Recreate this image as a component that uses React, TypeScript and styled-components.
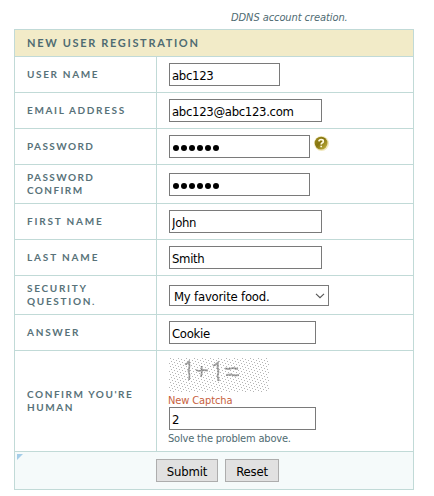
import React from 'react';
import styled, { createGlobalStyle } from 'styled-components';

const GlobalStyle = createGlobalStyle`
  *, *::before, *::after { box-sizing: border-box; }
  html, body { margin: 0; background: #fff; overflow: hidden; }
  body { font-family: "DejaVu Sans Condensed", "DejaVu Sans", sans-serif; }
`;

const line = '#c1dad7';
const ink = '#4f6b72';
const formFont = '"DejaVu Sans Condensed", "Noto Sans", "DejaVu Sans", sans-serif';

const Page = styled.main`
  width: 434px;
  height: 496px;
  padding: 10px 20px 0 14px;
  background: #fff;
`;

const Caption = styled.p`
  height: 19px;
  margin: 0;
  padding-left: 217px;
  font: italic 11px/15px "DejaVu Sans Condensed", "DejaVu Sans", sans-serif;
  letter-spacing: -0.08px;
  color: ${ink};
  white-space: nowrap;
`;

const Form = styled.form`
  width: 400px;
  border: 1px solid ${line};
  border-bottom: 0;
`;

const Title = styled.h1`
  height: 27px;
  margin: 0;
  padding-left: 12px;
  border-bottom: 1px solid ${line};
  background: #f2ebc8;
  color: ${ink};
  font: bold 11px/26px Lato, sans-serif;
  letter-spacing: 1.67px;
`;

const Row = styled.div<{ $height: number }>`
  display: grid;
  grid-template-columns: 142px 1fr;
  height: ${p => p.$height}px;
  border-bottom: 1px solid ${line};
`;

const Label = styled.label<{ $track?: number }>`
  display: flex;
  align-items: center;
  padding-left: 12px;
  border-right: 1px solid ${line};
  color: #587279;
  font: bold 10px/13px Lato, sans-serif;
  letter-spacing: ${p => p.$track ?? 1.65}px;
  white-space: pre;
`;

const Cell = styled.div`
  display: flex;
  align-items: center;
  padding-left: 12px;
`;

const Input = styled.input<{ $width: number }>`
  width: ${p => p.$width}px;
  height: 23px;
  margin: 0;
  padding: 3px 2px 1px;
  border: 1px solid #7a7a7a;
  border-radius: 0;
  outline: 0;
  background: #fff;
  color: #000;
  font: 13px/17px ${formFont};
  letter-spacing: -0.32px;
`;

const Secret = styled.div`
  display: flex;
  align-items: center;
  gap: 2px;
  width: 141px;
  height: 23px;
  padding: 3px 0 0 3px;
  border: 1px solid #7a7a7a;
`;

const Dot = styled.span`
  width: 6px;
  height: 6px;
  border-radius: 50%;
  background: #000;
`;

const HelpIcon = styled.svg`
  margin: -5px 0 0 4px;
`;

const SelectBox = styled.div`
  display: flex;
  align-items: center;
  justify-content: space-between;
  width: 160px;
  height: 21px;
  padding: 2px 3px 0 4px;
  border: 1px solid #7a7a7a;
  color: #000;
  font: 13px/17px ${formFont};
  letter-spacing: -0.22px;
`;

const CaptchaCell = styled.div`
  display: flex;
  flex-direction: column;
  padding: 7px 0 0 12px;
`;

const CaptchaLink = styled.a`
  height: 15px;
  margin-left: -1px;
  color: #c75f3e;
  font: 11px/17px "DejaVu Sans Condensed", "DejaVu Sans", sans-serif;
  letter-spacing: -0.12px;
`;

const Hint = styled.span`
  margin-left: -1px;
  color: ${ink};
  font: 11px/17px "DejaVu Sans Condensed", "DejaVu Sans", sans-serif;
  letter-spacing: -0.18px;
`;

const Footer = styled.div`
  display: flex;
  height: 38px;
  border-bottom: 1px solid ${line};
  background: #f5fafa;
`;

const Corner = styled.svg`
  margin: 2px 0 0 2px;
`;

const Buttons = styled.div`
  display: flex;
  gap: 7px;
  margin: 7px 0 0 133px;
`;

const Button = styled.button<{ $width: number }>`
  width: ${p => p.$width}px;
  height: 23px;
  padding: 2px 0 0;
  border: 1px solid #adadad;
  border-radius: 0;
  background: #e1e1e1;
  color: #000;
  font: 13px/17px ${formFont};
  letter-spacing: -0.2px;
`;

function Password() {
  return (
    <Secret>
      {Array.from({ length: 6 }, (_, i) => <Dot key={i} />)}
    </Secret>
  );
}

function Help() {
  return (
    <HelpIcon width="16" height="16" viewBox="0 0 16 16">
      <defs>
        <linearGradient id="gold" x1="0" y1="0" x2="1" y2="1">
          <stop offset="0" stopColor="#a08f24" />
          <stop offset="0.45" stopColor="#85740f" />
          <stop offset="1" stopColor="#cdbd48" />
        </linearGradient>
      </defs>
      <circle cx="7.5" cy="7.5" r="7.5" fill="#f1e8bd" />
      <circle cx="7.1" cy="7.1" r="6.4" fill="url(#gold)" />
      <path d="M4.9 5.3Q5.1 3.5 7.2 3.5Q9.4 3.6 9.3 5.3Q9.2 6.4 8 7Q7.2 7.4 7.2 8.5M7.2 9.7V11.3" fill="none" stroke="#fffbe0" strokeWidth="1.7" />
    </HelpIcon>
  );
}

function Captcha() {
  return (
    <svg width="100" height="34">
      <defs>
        <pattern id="grain" width="8" height="8" patternUnits="userSpaceOnUse">
          <path
            d="M1 0h1v1h-1zM4 1h1v1h-1zM7 2h1v1h-1zM2 3h1v1h-1zM5 4h1v1h-1zM0 5h1v1h-1zM3 6h1v1h-1zM6 7h1v1h-1z"
            fill="#b4b4b4"
            shapeRendering="crispEdges"
          />
        </pattern>
      </defs>
      <rect width="100" height="34" fill="url(#grain)" />
      <g fill="none" stroke="#a6a6a6" strokeWidth="1.8">
        <path d="M16 6.5L18 5.5L20 3.5L20.5 8L19.5 13L20.5 17L20 22" />
        <path d="M27 12L30 13L34 12L39 12.5M32.5 8L33 13L32 19" />
        <path d="M44 8L46.5 6.5L49 4.5L48.5 9L49.5 14L48.5 18L50 23" />
        <path d="M56 10.5L60 11L64 10L69 11M57 17L62 16.5L66 17.5L70 17" />
      </g>
      <g fill="none" stroke="#7d7d7d" strokeWidth="1" strokeDasharray="1 2">
        <path d="M17 6.5L20.5 4.5V22M27.5 12.5H39M32.5 8V19M45 7.5L49 5.5V23M57 10.5H69M57.5 17.5H70" />
      </g>
    </svg>
  );
}

export default function App() {
  return (
    <>
      <GlobalStyle />
      <Page>
        <Caption>DDNS account creation.</Caption>
        <Form>
          <Title>NEW USER REGISTRATION</Title>
          <Row $height={36}>
            <Label>USER NAME</Label>
            <Cell><Input $width={111} defaultValue="abc123" /></Cell>
          </Row>
          <Row $height={36}>
            <Label>EMAIL ADDRESS</Label>
            <Cell><Input $width={153} defaultValue="abc123@abc123.com" /></Cell>
          </Row>
          <Row $height={36}>
            <Label $track={1.4}>PASSWORD</Label>
            <Cell><Password /><Help /></Cell>
          </Row>
          <Row $height={39}>
            <Label $track={1.4}>{'PASSWORD\nCONFIRM'}</Label>
            <Cell><Password /></Cell>
          </Row>
          <Row $height={36}>
            <Label $track={1.8}>FIRST NAME</Label>
            <Cell><Input $width={153} defaultValue="John" /></Cell>
          </Row>
          <Row $height={36}>
            <Label $track={1.85}>LAST NAME</Label>
            <Cell><Input $width={153} defaultValue="Smith" /></Cell>
          </Row>
          <Row $height={39}>
            <Label $track={1.7}>{'SECURITY\nQUESTION.'}</Label>
            <Cell>
              <SelectBox>
                My favorite food.
                <svg width="10" height="6" viewBox="0 0 10 6">
                  <path d="M1 0.8L5 4.7L9 0.8" fill="none" stroke="#555" strokeWidth="1.1" />
                </svg>
              </SelectBox>
            </Cell>
          </Row>
          <Row $height={36}>
            <Label $track={1.75}>ANSWER</Label>
            <Cell><Input $width={147} defaultValue="Cookie" /></Cell>
          </Row>
          <Row $height={101}>
            <Label $track={1.55}>{"CONFIRM YOU'RE\nHUMAN"}</Label>
            <CaptchaCell>
              <Captcha />
              <CaptchaLink>New Captcha</CaptchaLink>
              <Input $width={147} defaultValue="2" />
              <Hint>Solve the problem above.</Hint>
            </CaptchaCell>
          </Row>
          <Footer>
            <Corner width="6" height="6"><path d="M0 0H6L0 6Z" fill="#a5cde8" /></Corner>
            <Buttons>
              <Button type="button" $width={62}>Submit</Button>
              <Button type="button" $width={54}>Reset</Button>
            </Buttons>
          </Footer>
        </Form>
      </Page>
    </>
  );
}
